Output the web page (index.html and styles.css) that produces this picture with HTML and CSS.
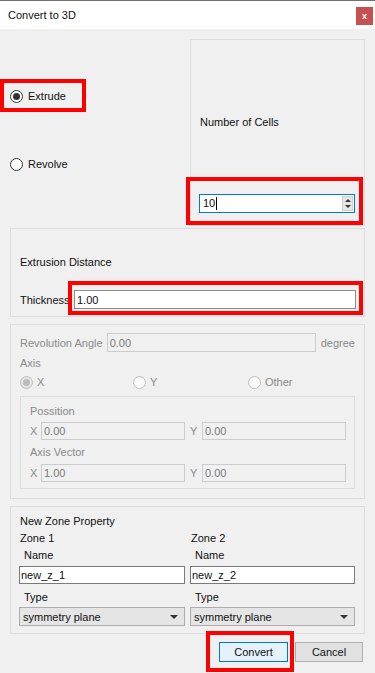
FILE: index.html
```html
<!DOCTYPE html>
<html lang="en">
<head>
    <meta charset="UTF-8">
    <meta name="viewport" content="width=device-width, initial-scale=1.0">
    <title>Convert to 3D</title>
    <link rel="stylesheet" href="styles.css">
</head>
<body>
    <div class="window">
        <div class="titlebar">
            <span class="title">Convert to 3D</span>
            <span class="close">x</span>
        </div>

        <div class="top">
            <div class="mode">
                <div class="radio-row extrude mark"><span class="radio checked"></span>Extrude</div>
                <div class="radio-row revolve"><span class="radio"></span>Revolve</div>
            </div>
            <div class="group cells">
                <div class="cells-label">Number of Cells</div>
                <div class="spin mark">
                    <span class="spin-value">10<span class="caret"></span></span>
                    <span class="spin-btns">
                        <span class="spin-up"></span>
                        <span class="spin-down"></span>
                    </span>
                </div>
            </div>
        </div>

        <div class="group section extrusion">
            <div class="extrusion-label">Extrusion Distance</div>
            <div class="thick-row">
                <label for="thickness">Thickness</label>
                <div class="thick-wrap mark">
                    <input type="text" id="thickness" class="thick-input" value="1.00" readonly>
                </div>
            </div>
        </div>

        <div class="group section revolution">
            <div class="angle-row">
                <label>Revolution Angle</label>
                <input type="text" class="off-input angle-input" value="0.00" disabled>
                <span class="unit">degree</span>
            </div>
            <div class="axis-label">Axis</div>
            <div class="axis-opts">
                <div class="axis-opt opt-x"><span class="radio off checked"></span>X</div>
                <div class="axis-opt opt-y"><span class="radio off"></span>Y</div>
                <div class="axis-opt"><span class="radio off"></span>Other</div>
            </div>
            <div class="inner">
                <div class="inner-label">Possition</div>
                <div class="coord-row">
                    <span class="coord-x">X</span>
                    <input type="text" class="off-input coord-input" value="0.00" disabled>
                    <span class="coord-y">Y</span>
                    <input type="text" class="off-input coord-input" value="0.00" disabled>
                </div>
                <div class="inner-label second">Axis Vector</div>
                <div class="coord-row second">
                    <span class="coord-x">X</span>
                    <input type="text" class="off-input coord-input" value="1.00" disabled>
                    <span class="coord-y">Y</span>
                    <input type="text" class="off-input coord-input" value="0.00" disabled>
                </div>
            </div>
        </div>

        <div class="group section zone">
            <div class="zone-title">New Zone Property</div>
            <div class="zone-cols">
                <div class="zone-col">
                    <div class="zone-head">Zone 1</div>
                    <div class="field-label">Name</div>
                    <input type="text" class="zone-input" value="new_z_1" readonly>
                    <div class="field-label type">Type</div>
                    <div class="zone-select"><span>symmetry plane</span><span class="arrow"></span></div>
                </div>
                <div class="zone-col second">
                    <div class="zone-head">Zone 2</div>
                    <div class="field-label">Name</div>
                    <input type="text" class="zone-input" value="new_z_2" readonly>
                    <div class="field-label type">Type</div>
                    <div class="zone-select"><span>symmetry plane</span><span class="arrow"></span></div>
                </div>
            </div>
        </div>

        <div class="actions">
            <button type="button" class="btn convert mark">Convert</button>
            <button type="button" class="btn cancel">Cancel</button>
        </div>
    </div>
</body>
</html>
```

FILE: styles.css
```css
*, *::before, *::after {
    box-sizing: border-box;
}

body {
    margin: 0;
    background-color: #f0f0f0;
    color: #111111;
    font-family: "Liberation Sans", Arial, sans-serif;
    font-size: 11px;
}

.window {
    width: 375px;
    height: 673px;
    background-color: #f0f0f0;
    overflow: hidden;
}

.titlebar {
    height: 29px;
    border-top: 1px solid #707070;
    background-color: #ffffff;
    display: flex;
    justify-content: space-between;
    align-items: flex-start;
}

.title {
    padding-left: 8px;
    margin-top: 7px;
    line-height: 14px;
}

.close {
    width: 17px;
    height: 18px;
    margin-top: 6px;
    margin-right: 2px;
    background-color: #c75050;
    color: #ffffff;
    font-size: 9px;
    font-weight: bold;
    display: flex;
    align-items: center;
    justify-content: center;
}

/* red highlight boxes drawn over the controls */
.mark {
    position: relative;
}

.mark::after {
    content: "";
    position: absolute;
    border: 4px solid #ff0000;
    pointer-events: none;
}

.group {
    border: 1px solid #dcdcdc;
}

.section {
    margin-left: 10px;
    width: 355px;
}

/* radio buttons */
.radio {
    width: 13px;
    height: 13px;
    flex: none;
    border: 1px solid #333333;
    border-radius: 50%;
    background-color: #ffffff;
    display: flex;
    align-items: center;
    justify-content: center;
}

.radio.checked::before {
    content: "";
    width: 7px;
    height: 7px;
    border-radius: 50%;
    background-color: #333333;
}

.radio.off {
    border-color: #bcbcbc;
    background-color: #fbfbfb;
}

.radio.off.checked {
    background-color: #e6e6e6;
}

.radio.off.checked::before {
    background-color: #bcbcbc;
}

/* top area */
.top {
    display: flex;
    margin-top: 10px;
    height: 187px;
}

.mode {
    width: 190px;
    display: flex;
    flex-direction: column;
}

.radio-row {
    display: flex;
    align-items: center;
    gap: 5px;
    height: 20px;
    padding-left: 10px;
}

.extrude {
    margin-top: 47px;
}

.extrude::after {
    left: 0;
    top: -7px;
    width: 86px;
    height: 33px;
}

.revolve {
    margin-top: 48px;
}

.cells {
    width: 175px;
    padding-left: 8px;
}

.cells-label {
    margin-top: 75px;
    margin-left: 1px;
    line-height: 14px;
}

.spin {
    margin-top: 65px;
    width: 156px;
    height: 19px;
    border: 1px solid #0078d7;
    background-color: #ffffff;
    display: flex;
}

.spin::after {
    left: -14px;
    top: -18px;
    width: 177px;
    height: 48px;
}

.spin-value {
    flex: 1;
    padding-left: 3px;
    line-height: 17px;
}

.caret {
    display: inline-block;
    width: 1px;
    height: 13px;
    margin-left: 1px;
    background-color: #000000;
    vertical-align: -3px;
}

.spin-btns {
    width: 11px;
    margin: 1px;
    display: flex;
    flex-direction: column;
    background-color: #e6e6e6;
    border: 1px solid #cfcfcf;
}

.spin-up, .spin-down {
    flex: 1;
    display: flex;
    align-items: center;
    justify-content: center;
}

.spin-up::before {
    content: "";
    border-left: 3px solid transparent;
    border-right: 3px solid transparent;
    border-bottom: 3px solid #333333;
}

.spin-down::before {
    content: "";
    border-left: 3px solid transparent;
    border-right: 3px solid transparent;
    border-top: 3px solid #333333;
}

/* extrusion */
.extrusion {
    margin-top: 2px;
    height: 89px;
    padding-left: 8px;
}

.extrusion-label {
    margin-top: 26px;
    padding-left: 1px;
    line-height: 14px;
}

.thick-row {
    display: flex;
    align-items: center;
    margin-top: 21px;
}

.thick-row label {
    width: 55px;
    padding-left: 1px;
    line-height: 14px;
}

.thick-wrap::after {
    left: -6px;
    top: -9px;
    width: 295px;
    height: 34px;
}

.thick-input {
    display: block;
    width: 282px;
    height: 19px;
    margin: 0;
    padding: 0 2px;
    border: 1px solid #8c8c8c;
    background-color: #ffffff;
    font: inherit;
    color: #111111;
    outline: none;
}

/* revolution (disabled) */
.revolution {
    margin-top: 7px;
    height: 175px;
    padding: 0 9px;
    color: #8a8a8a;
}

.off-input {
    display: block;
    margin: 0;
    padding: 0 2px;
    border: 1px solid #cccccc;
    background-color: #f0f0f0;
    font: inherit;
    color: #7a7a7a;
}

.angle-row {
    display: flex;
    align-items: center;
    height: 19px;
    margin-top: 8px;
}

.angle-row label {
    width: 87px;
}

.angle-input {
    width: 210px;
    height: 19px;
}

.unit {
    margin-left: 5px;
}

.axis-label {
    margin-top: 4px;
    line-height: 14px;
}

.axis-opts {
    display: flex;
    align-items: center;
    height: 14px;
    margin-top: 5px;
}

.axis-opt {
    display: flex;
    align-items: center;
    gap: 4px;
}

.opt-x {
    width: 113px;
}

.opt-y {
    width: 115px;
}

.inner {
    margin-top: 7px;
    height: 93px;
    border: 1px solid #dcdcdc;
    padding-left: 9px;
}

.inner-label {
    margin-top: 7px;
    line-height: 14px;
}

.inner-label.second {
    margin-top: 5px;
}

.coord-row {
    display: flex;
    align-items: center;
    height: 18px;
    margin-top: 4px;
}

.coord-row.second {
    margin-top: 5px;
}

.coord-x {
    width: 11px;
}

.coord-y {
    width: 12px;
    margin-left: 5px;
}

.coord-input {
    width: 144px;
    height: 18px;
}

/* new zone property */
.zone {
    margin-top: 7px;
    height: 128px;
    padding-left: 8px;
}

.zone-title {
    margin-top: 7px;
    padding-left: 1px;
    line-height: 14px;
}

.zone-cols {
    display: flex;
    gap: 5px;
}

.zone-col {
    width: 166px;
}

.zone-col.second {
    width: 165px;
}

.zone-head {
    margin-top: 3px;
    padding-left: 1px;
    line-height: 14px;
}

.field-label {
    margin-top: 3px;
    padding-left: 5px;
    line-height: 14px;
}

.field-label.type {
    margin-top: 6px;
}

.zone-input {
    display: block;
    width: 100%;
    height: 18px;
    margin: 4px 0 0;
    padding: 0 1px;
    border: 1px solid #7a7a7a;
    background-color: #ffffff;
    font: inherit;
    color: #111111;
    outline: none;
}

.zone-select {
    margin-top: 3px;
    height: 19px;
    padding: 0 6px 0 3px;
    border: 1px solid #adadad;
    background-color: #e5e5e5;
    display: flex;
    justify-content: space-between;
    align-items: center;
}

.arrow {
    border-left: 4px solid transparent;
    border-right: 4px solid transparent;
    border-top: 4px solid #333333;
}

/* buttons */
.actions {
    display: flex;
    justify-content: flex-end;
    gap: 7px;
    margin-top: 8px;
    padding-right: 12px;
}

.btn {
    height: 20px;
    margin: 0;
    padding: 0;
    border: 1px solid #adadad;
    background-color: #e1e1e1;
    color: #111111;
    font: inherit;
    cursor: pointer;
}

.convert {
    width: 69px;
    border-color: #0078d7;
    background-color: #e5f1fb;
}

.convert::after {
    left: -14px;
    top: -12px;
    width: 88px;
    height: 41px;
}

.cancel {
    width: 68px;
}
```
